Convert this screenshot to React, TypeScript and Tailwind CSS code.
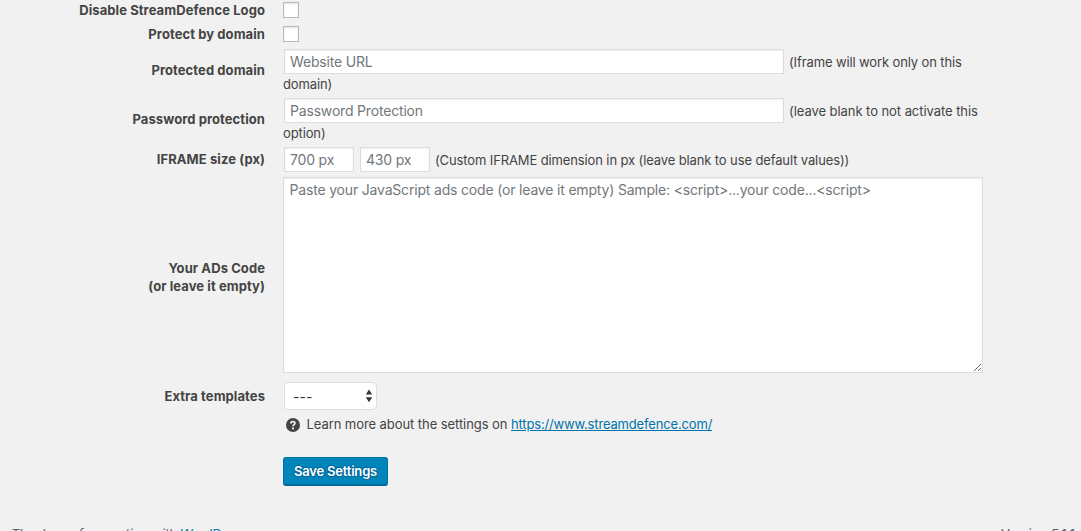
import type { ReactNode } from "react";

type RowProps = { label?: ReactNode; height: string; children: ReactNode };

function Row({ label, height, children }: RowProps) {
  return (
    <div className={`flex shrink-0 ${height}`}>
      <div className="flex w-[265px] shrink-0 items-center justify-end pb-px text-right text-[13px] leading-[18px] font-bold tracking-[0.08px] whitespace-nowrap">
        <span>{label}</span>
      </div>
      <div className="ml-[18px] w-[700px] min-w-0">{children}</div>
    </div>
  );
}

const field =
  "block border border-[#ddd] bg-white px-[5px] text-[14px] tracking-[-0.18px] text-[#32373c] shadow-[inset_0_1px_2px_rgba(0,0,0,0.07)] outline-none placeholder:text-[#72777c] placeholder:opacity-100";

const checkbox =
  "block size-4 appearance-none border border-[#b4b9be] bg-white shadow-[inset_0_1px_2px_rgba(0,0,0,0.1)]";

export default function App() {
  return (
    <div className="flex h-[531px] w-[1081px] flex-col overflow-hidden bg-[#f1f1f1] font-['Inter',sans-serif] text-[13px] tracking-[-0.12px] text-[#444]">
      <Row label={<span className="block pb-px">Disable StreamDefence Logo</span>} height="h-[22px]">
        <input type="checkbox" className={`mt-[2px] ${checkbox}`} />
      </Row>
      <Row label="Protect by domain" height="h-6">
        <input type="checkbox" className={`mt-1 ${checkbox}`} />
      </Row>
      <Row label="Protected domain" height="h-[49px]">
        <div className="flex items-center pt-[3px] pl-px">
          <input placeholder="Website URL" className={`h-[25px] w-[500px] ${field}`} />
          <span className="ml-[5px] leading-[18px] whitespace-nowrap">(Iframe will work only on this</span>
        </div>
        <div className="mt-px leading-[18px]">domain)</div>
      </Row>
      <Row label="Password protection" height="h-[49px]">
        <div className="flex items-center pt-[3px] pl-px">
          <input placeholder="Password Protection" className={`h-[25px] w-[500px] ${field}`} />
          <span className="ml-[5px] leading-[18px] tracking-[-0.06px] whitespace-nowrap">
            (leave blank to not activate this
          </span>
        </div>
        <div className="mt-px leading-[18px]">option)</div>
      </Row>
      <Row label="IFRAME size (px)" height="h-[31px]">
        <div className="flex items-center pt-[3px] pl-px">
          <input placeholder="700 px" className={`h-[25px] w-[70px] ${field}`} />
          <input placeholder="430 px" className={`ml-[6px] h-[25px] w-[70px] ${field}`} />
          <span className="ml-[5px] leading-[18px] whitespace-nowrap">
            (Custom IFRAME dimension in px (leave blank to use default values))
          </span>
        </div>
      </Row>
      <Row
        label={
          <>
            Your ADs Code
            <br />
            (or leave it empty)
          </>
        }
        height="h-[205px]"
      >
        <textarea
          placeholder="Paste your JavaScript ads code (or leave it empty) Sample: <script>...your code...<script>"
          className={`mt-[2px] h-[196px] w-[700px] resize py-[2px] indent-[0.5px] leading-[20px] ${field}`}
        />
      </Row>
      <Row label="Extra templates" height="h-8">
        <div className="mt-[2px] ml-px flex h-7 w-[93px] items-center justify-between rounded-[4px] border border-[#ddd] bg-white pr-[3px] pl-2 text-[14px] text-[#32373c]">
          <span className="tracking-normal">---</span>
          <svg width="8" height="14" viewBox="0 0 8 14" fill="#32373c">
            <path d="M4 0.5 7.2 5.5H0.8ZM4 13.2 0.8 8.2H7.2Z" />
          </svg>
        </div>
      </Row>
      <Row height="h-[45px]">
        <div className="flex items-center pt-[3px] pl-[3px] leading-[18px] whitespace-nowrap">
          <svg width="14" height="14" viewBox="0 0 14 14" className="relative top-px mr-[6.5px]">
            <circle cx="7" cy="7" r="7" fill="#444" />
            <path d="M4.9 5.4C4.9 3 9 3 9 5.2 9 6.7 7 6.5 7 8.2" fill="none" stroke="#f1f1f1" strokeWidth="1.7" />
            <circle cx="7" cy="10.4" r="1.05" fill="#f1f1f1" />
          </svg>
          <span className="tracking-[-0.07px]">
            Learn more about the settings on{" "}
            <a href="#" className="tracking-[-0.16px] text-[#0073aa] underline">
              https://www.streamdefence.com/
            </a>
          </span>
        </div>
      </Row>
      <Row height="h-[68px]">
        <button className="flex h-[29px] w-[105px] items-center justify-center rounded-[3px] border border-[#0073aa] border-b-[#006799] bg-[#0085ba] text-[13px] font-semibold tracking-[-0.2px] whitespace-nowrap text-white shadow-[inset_0_-1px_0_#006799] [text-shadow:0_-1px_1px_#006799,1px_0_1px_#006799,0_1px_1px_#006799,-1px_0_1px_#006799]">
          Save Settings
        </button>
      </Row>
      <div className="flex h-5 shrink-0 justify-between pr-[6px] pl-[11px] leading-[18px] tracking-[-0.16px] whitespace-nowrap text-[#555d66]">
        <span className="italic">
          Thank you for creating with{" "}
          <a href="#" className="text-[#0073aa]">
            WordPress
          </a>
          .
        </span>
        <span className="tracking-[0.06px]">Version 5.1.1</span>
      </div>
    </div>
  );
}
